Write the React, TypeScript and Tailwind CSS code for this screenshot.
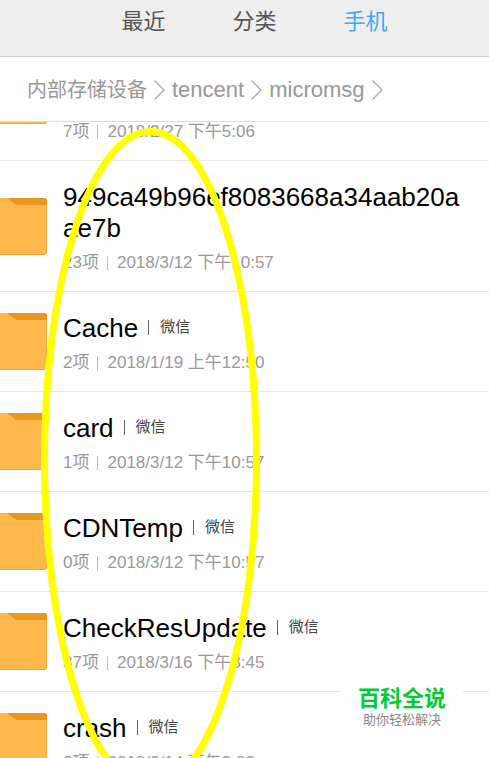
const tabs = [
  { label: "最近", active: false },
  { label: "分类", active: false },
  { label: "手机", active: true },
]

const crumbs = [
  { label: "内部存储设备", size: "text-[20px]" },
  { label: "tencent", size: "text-[22px]" },
  { label: "micromsg", size: "text-[22px]" },
]

type Entry = {
  name?: string
  app?: string
  count: string
  date: string
  tall?: boolean
}

const entries: Entry[] = [
  { count: "7项", date: "2018/2/27 下午5:06", tall: true },
  {
    name: "949ca49b96ef8083668a34aab20aae7b",
    count: "23项",
    date: "2018/3/12 下午10:57",
    tall: true,
  },
  { name: "Cache", app: "微信", count: "2项", date: "2018/1/19 上午12:50" },
  { name: "card", app: "微信", count: "1项", date: "2018/3/12 下午10:57" },
  { name: "CDNTemp", app: "微信", count: "0项", date: "2018/3/12 下午10:57" },
  {
    name: "CheckResUpdate",
    app: "微信",
    count: "37项",
    date: "2018/3/16 下午3:45",
  },
  { name: "crash", app: "微信", count: "3项", date: "2018/3/14 下午3:03" },
]

function Folder() {
  return (
    <svg width="47" height="57" viewBox="0 0 47 57" className="shrink-0" aria-hidden="true">
      <path d="M0 0H44Q47 0 47 3V54Q47 57 44 57H0Z" fill="#e89c2c" />
      <path d="M0 0H7L16 7H46.5V53.5Q46.5 56.3 44 56.3H0Z" fill="#fdb94b" />
      <path d="M8 0H44Q47 0 47 3V7H18Q16 7 14 5Z" fill="#ea971f" />
    </svg>
  )
}

function Chevron() {
  return (
    <svg
      width="11"
      height="20"
      viewBox="0 0 11 20"
      fill="none"
      stroke="#a8a8a8"
      strokeWidth="1.3"
      className="mx-[7px] shrink-0"
      aria-hidden="true"
    >
      <path d="M0.5 0.5L10 10L0.5 19.5" />
    </svg>
  )
}

function EntryRow({ name, app, count, date, tall }: Entry) {
  return (
    <li
      className={`flex shrink-0 items-center gap-4 border-b border-[#e6e6e6] ${
        tall ? "h-[131px]" : "h-[100px]"
      }`}
    >
      <Folder />
      <div className="flex h-full min-w-0 flex-1 flex-col justify-end pr-6 pb-[18px]">
        {name && (
          <div className="mb-[9px] flex items-start">
            <a
              href="#"
              className="min-w-0 text-[26px] leading-[31px] break-all text-black"
            >
              {name}
            </a>
            {app && (
              <span className="ml-[10px] flex shrink-0 items-center gap-[11px] pt-1 text-[15px] leading-5 text-[#444]">
                <span className="h-[15px] w-px bg-[#666]" />
                {app}
              </span>
            )}
          </div>
        )}
        <p className="flex items-center text-[17px] leading-5 whitespace-nowrap text-[#999]">
          {count}
          <span className="mr-[9px] ml-[8px] h-[14px] w-px bg-[#bbb]" />
          {date}
        </p>
      </div>
    </li>
  )
}

export default function App() {
  return (
    <div className="relative flex h-screen flex-col overflow-hidden bg-white font-['Liberation_Sans','Noto_Sans_CJK_SC',sans-serif]">
      <nav className="flex h-[57px] shrink-0 justify-center gap-[67px] border-b border-[#d0d0d0] bg-[#eee] pt-[6px] pl-5">
        {tabs.map((tab) => (
          <button
            key={tab.label}
            type="button"
            className={`h-8 text-[22px] leading-8 ${
              tab.active ? "text-[#3fa9f5]" : "text-[#555]"
            }`}
          >
            {tab.label}
          </button>
        ))}
      </nav>
      <nav className="flex h-[65px] shrink-0 items-center border-b border-[#dedede] pt-[2px] pl-[27px] text-[#999]">
        {crumbs.map((crumb) => (
          <span key={crumb.label} className="flex items-center">
            <a href="#" className={`leading-8 ${crumb.size}`}>
              {crumb.label}
            </a>
            <Chevron />
          </span>
        ))}
      </nav>
      <main className="min-h-0 flex-1 overflow-hidden">
        {/* list is scrolled part way through the first row */}
        <ul className="-mt-[92px] flex flex-col">
          {entries.map((entry, i) => (
            <EntryRow key={i} {...entry} />
          ))}
        </ul>
      </main>
      <svg
        className="pointer-events-none absolute top-0 left-0"
        width="300"
        height="800"
        viewBox="0 0 300 800"
        aria-hidden="true"
      >
        <ellipse
          cx="150.5"
          cy="459.5"
          rx="106"
          ry="328"
          fill="none"
          stroke="#ffff00"
          strokeWidth="7"
        />
      </svg>
      <div className="absolute right-[26px] bottom-[26px] flex w-[122px] flex-col items-center bg-white py-1">
        <strong className="text-[22px] leading-[26px] font-bold text-[#00cc33]">
          百科全说
        </strong>
        <span className="text-[13px] leading-4 text-[#888]">助你轻松解决</span>
      </div>
    </div>
  )
}
